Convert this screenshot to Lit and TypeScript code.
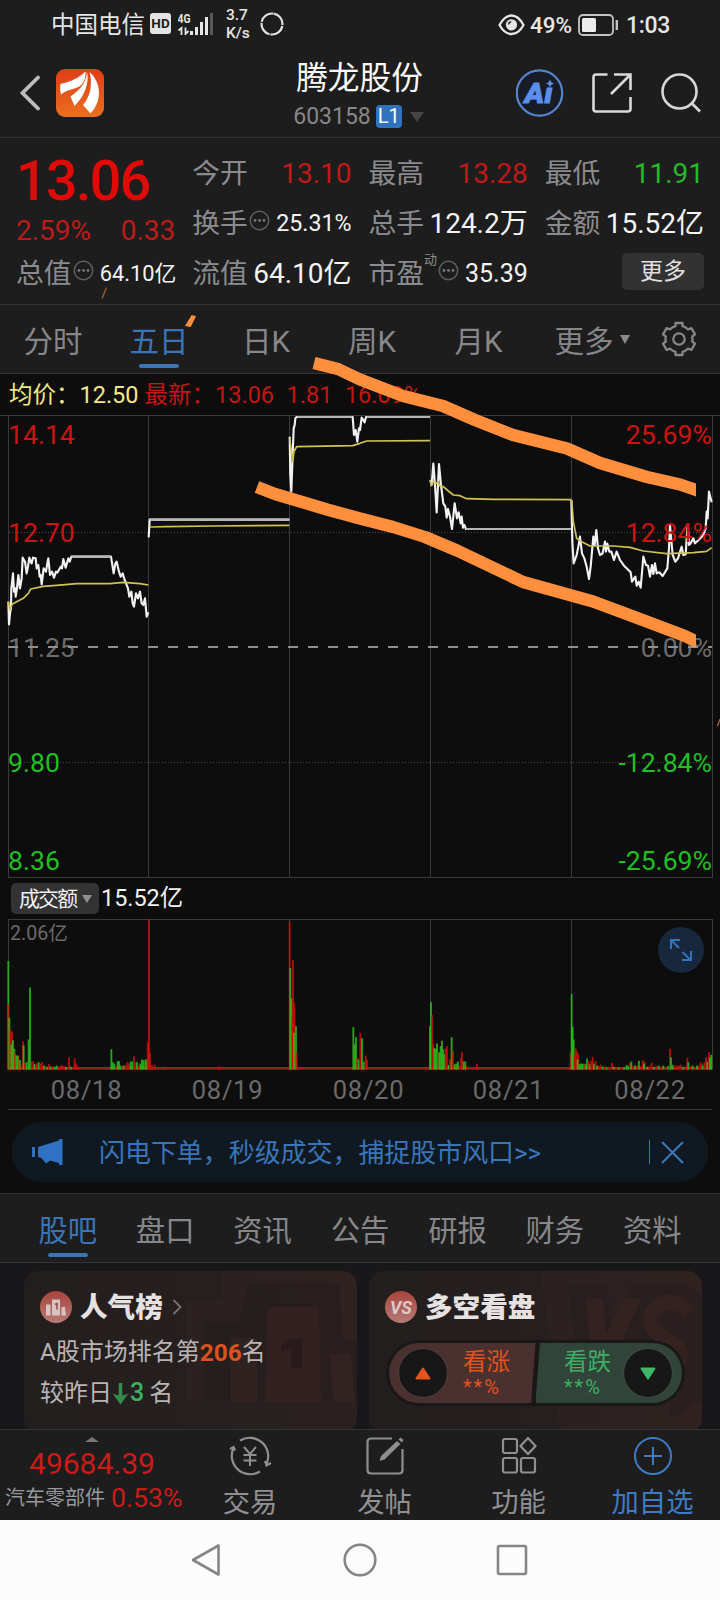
import { LitElement, html, svg, css } from "lit";
import { customElement, property } from "lit/decorators.js";

type Pts = string;
type Bar = [number, number, number];

// Price traces on a x3 grid whose origin is the top-left of the legend strip.
const PRICE: Pts[] = [
  "25,680 27,748 30,715 33,700 34,640 39,595 42,650 46,640 47,665 51,640 55,600 60,640 65,610 68,548 75,560 80,595 84,575 88,548 92,560 95,565 99,548 107,550 110,580 115,570 119,605 122,600 125,628 131,580 138,590 142,565 145,550 150,600 156,590 162,608 168,590 172,593 182,575 186,580 190,552 197,578 205,550 209,560 214,545 333,545 341,595 346,565 350,560 357,590 362,605 368,595 373,612 378,625 384,640 388,665 394,650 398,685 402,695 408,655 414,670 420,650 425,685 430,690 435,670 440,725 445,712",
  "446,487 449,434 868,434",
  "869,185 871,300 874,350 878,240 881,160 884,150 886,130 890,126 1058,126 1062,180 1067,165 1072,200 1077,160 1080,165 1085,128 1094,142 1098,126 1290,126",
  "1292,315 1295,330 1300,266 1305,330 1310,412 1317,267 1323,330 1330,385 1336,395 1340,428 1344,402 1350,425 1356,462 1364,385 1371,430 1376,412 1382,445 1385,425 1389,458 1393,450 1398,462 1712,462",
  "1714,375 1717,500 1721,565 1730,540 1735,515 1740,485 1746,535 1753,550 1760,575 1767,612 1772,575 1780,485 1784,510 1789,465 1794,520 1800,540 1808,535 1815,500 1818,530 1822,506 1828,530 1834,530 1842,555 1850,530 1860,555 1872,572 1880,580 1892,592 1896,620 1906,605 1910,632 1916,620 1922,638 1928,570 1930,545 1938,570 1944,572 1950,605 1956,570 1960,597 1965,565 1970,595 1978,592 1988,603 1996,590 2002,580 2007,520 2010,450 2018,540 2026,560 2034,550 2045,515 2050,540 2057,538 2060,490 2063,450 2067,510 2072,505 2080,490 2085,505 2096,495 2110,480 2117,460 2120,410 2123,430 2127,350 2135,382",
];
const FLAT: Pts[] = ["214,545 333,545", "449,434 868,434", "892,126 1056,126", "1100,126 1290,126", "1398,462 1712,462"];
const AVERAGE: Pts[] = [
  "25,680 30,705 36,688 50,680 70,670 85,655 92,642 130,634 170,631 230,626 330,626 370,622 420,626 445,630",
  "449,456 500,455 640,453 868,451",
  "869,190 874,225 878,260 882,230 890,215 1058,212 1080,205 1100,198 1290,197",
  "1290,315 1294,332 1300,320 1308,325 1315,320 1318,332 1330,335 1345,348 1360,360 1380,362 1400,371 1480,373 1715,374",
  "1715,375 1720,440 1730,490 1745,500 1770,513 1840,513 1890,517 1930,528 2000,536 2080,533 2120,529 2135,518",
];

// Turnover bars: [x, height, direction] on the same x3 grid; 1 = up, 0 = down.
const VOLUME: Bar[] = [
  [25, 325, 0], [24, 195, 1], [28, 155, 0], [31, 118, 1], [36, 114, 1], [34, 75, 0], [39, 88, 0], [43, 62, 0], [45, 50, 1], [49, 42, 0],
  [55, 40, 1], [53, 42, 0], [60, 28, 0], [64, 15, 1], [69, 84, 1], [71, 72, 0], [75, 20, 1], [80, 22, 0], [86, 90, 0], [90, 246, 0],
  [95, 25, 1], [100, 24, 1], [104, 16, 0], [110, 18, 1], [116, 22, 0], [121, 17, 1], [126, 22, 1], [132, 12, 0], [137, 10, 1], [142, 8, 0],
  [147, 16, 1], [152, 9, 0], [158, 10, 1], [164, 8, 0], [170, 12, 0], [176, 8, 1], [182, 11, 1], [187, 13, 1], [192, 9, 1], [198, 7, 0],
  [207, 36, 1], [212, 9, 0], [224, 34, 1], [228, 18, 1], [233, 10, 1],
  [334, 61, 0], [338, 22, 0], [343, 18, 0], [349, 10, 1], [353, 25, 0], [357, 25, 0], [362, 12, 0], [367, 10, 1], [371, 12, 0], [377, 14, 1],
  [382, 22, 1], [387, 18, 1], [392, 24, 0], [397, 24, 0], [402, 40, 1], [407, 22, 1], [411, 22, 0], [416, 12, 1], [421, 18, 0], [426, 30, 0],
  [431, 28, 0], [437, 30, 0], [441, 30, 0], [443, 80, 1], [447, 450, 1], [450, 50, 1], [456, 14, 1], [464, 15, 1], [495, 8, 1], [658, 9, 1],
  [869, 443, 1], [871, 304, 0], [874, 214, 0], [879, 328, 1], [877, 155, 1], [883, 200, 1], [882, 110, 0], [888, 130, 0], [890, 50, 1],
  [1060, 127, 0], [1064, 75, 0], [1068, 97, 0], [1072, 36, 1], [1076, 30, 0], [1081, 110, 1], [1086, 94, 0], [1091, 24, 0], [1097, 42, 1], [1101, 30, 1],
  [1290, 130, 0], [1293, 202, 0], [1296, 163, 1], [1300, 76, 1], [1303, 64, 0], [1307, 62, 0], [1311, 78, 0], [1315, 48, 1], [1318, 52, 0],
  [1322, 70, 0], [1326, 86, 0], [1330, 60, 0], [1333, 46, 0], [1337, 62, 1], [1341, 70, 1], [1346, 14, 0], [1350, 30, 1], [1355, 97, 0],
  [1359, 56, 1], [1364, 16, 0], [1369, 18, 0], [1374, 24, 0], [1379, 12, 1], [1383, 34, 1], [1386, 52, 1], [1391, 24, 0], [1396, 24, 0], [1401, 10, 1], [1431, 17, 1],
  [1712, 50, 1], [1715, 226, 0], [1718, 128, 0], [1721, 90, 0], [1724, 40, 1], [1727, 64, 1], [1731, 54, 1], [1735, 46, 1], [1733, 30, 0],
  [1739, 16, 0], [1744, 18, 0], [1749, 17, 0], [1753, 18, 1], [1757, 16, 0], [1761, 33, 0], [1765, 26, 1], [1769, 16, 0], [1774, 26, 1],
  [1778, 38, 1], [1782, 18, 0], [1787, 25, 1], [1792, 12, 0], [1797, 10, 1], [1802, 15, 1], [1808, 9, 0], [1814, 8, 1], [1820, 6, 0],
  [1826, 6, 1], [1836, 20, 1], [1841, 8, 0], [1848, 7, 1], [1856, 7, 0], [1864, 6, 1], [1872, 7, 0], [1880, 13, 0], [1885, 10, 0],
  [1890, 20, 1], [1894, 24, 0], [1899, 10, 1], [1905, 12, 0], [1911, 12, 1], [1917, 26, 0], [1923, 10, 1], [1928, 28, 1], [1934, 24, 1],
  [1932, 18, 0], [1942, 8, 0], [1948, 10, 1], [1955, 20, 1], [1962, 7, 0], [1969, 10, 1], [1976, 12, 0], [1984, 9, 1], [1990, 12, 0],
  [1998, 7, 1], [2005, 11, 0], [2010, 62, 1], [2013, 36, 0], [2018, 14, 0], [2024, 10, 1], [2030, 12, 1], [2037, 12, 1], [2043, 14, 1],
  [2050, 8, 0], [2058, 9, 1], [2062, 36, 1], [2065, 22, 0], [2071, 10, 1], [2078, 12, 0], [2085, 7, 1], [2091, 12, 0], [2097, 10, 1],
  [2102, 22, 1], [2108, 14, 0], [2113, 22, 1], [2118, 36, 1], [2122, 24, 0], [2127, 52, 1], [2130, 36, 0], [2134, 44, 0],
];

const DIVIDERS = [8.5, 148.5, 289.5, 430.5, 571.5, 712.5];
const DATES: [string, number][] = [["08/18", 86.5], ["08/19", 227.5], ["08/20", 368.5], ["08/21", 508.5], ["08/22", 650]];

@customElement("trend-chart")
export class TrendChart extends LitElement {
  static styles = css`
    :host { display: block; }
    svg { display: block; font-family: Roboto, "Noto Sans CJK SC", sans-serif; }
    .grid { stroke: #3a3a3a; stroke-width: 1; fill: none; }
    .dot { stroke: #4a4a4a; stroke-dasharray: 1 2; }
    .base { stroke: #8f8f8f; stroke-width: 2; stroke-dasharray: 10 10; }
    .price { stroke: #f2f2f2; stroke-width: 6.4; fill: none; stroke-linejoin: round; }
    .flat { stroke: #b4b6b6; stroke-width: 6.4; fill: none; }
    .avg { stroke: #d0c354; stroke-width: 5; fill: none; stroke-linejoin: round; }
    .lab { font-size: 26.6px; }
    .end { text-anchor: end; }
    .up { fill: #ca1513; }
    .mid { fill: #6c6c6c; }
    .down { fill: #20bf22; }
  `;
  render() {
    const rows: [number, string, string, string][] = [
      [444, "14.14", "25.69%", "up"],
      [542.2, "12.70", "12.84%", "up"],
      [657.2, "11.25", "0.00%", "mid"],
      [772.2, "9.80", "-12.84%", "down"],
      [870, "8.36", "-25.69%", "down"],
    ];
    return html`<svg width="720" height="463" viewBox="0 415 720 463">
      <path class="grid" d="M0 415.5H720M8 877.5H713" />
      ${DIVIDERS.map((x) => svg`<path class="grid" d="M${x} 416V877" />`)}
      <path class="grid dot" d="M9 532.5H712M9 762.5H712" />
      <g transform="translate(0 375) scale(.33333)">
        ${PRICE.map((p) => svg`<polyline class="price" points=${p} />`)}
        ${FLAT.map((p) => svg`<polyline class="flat" points=${p} />`)}
        ${AVERAGE.map((p) => svg`<polyline class="avg" points=${p} />`)}
      </g>
      ${rows.map((r) => svg`<text class="lab ${r[3]}" x="8" y=${r[0]}>${r[1]}</text><text class="lab end ${r[3]}" x="712" y=${r[0]}>${r[2]}</text>`)}
      <path class="base" d="M8 647H712" />
    </svg>`;
  }
}

@customElement("turnover-chart")
export class TurnoverChart extends LitElement {
  static styles = css`
    :host { display: block; }
    svg { display: block; font-family: Roboto, "Noto Sans CJK SC", sans-serif; }
    .grid { stroke: #3a3a3a; stroke-width: 1; fill: none; }
    .max { font-size: 19.6px; fill: #6a6a6a; }
    .date { font-size: 25.5px; fill: #6a6a6a; text-anchor: middle; letter-spacing: 0.7px; }
    .u { fill: #cf100d; opacity: 0.82; }
    .d { fill: #2bc31c; opacity: 0.82; }
    .floor { fill: #961f1f; }
    .arrow { stroke: #3273bd; stroke-width: 2; fill: none; }
  `;
  render() {
    return html`<svg width="720" height="191" viewBox="0 919 720 191">
      <path class="grid" d="M8 919.5H713M8 1109.5H712" />
      ${DIVIDERS.map((x) => svg`<path class="grid" d="M${x} 920V1069" />`)}
      <text class="max" x="10" y="940">2.06亿</text>
      <rect class="floor" x="8" y="1067" width="704.5" height="2.7" />
      <g transform="translate(0 1069.5) scale(.33333)">
        ${VOLUME.map(([x, h, up]) => svg`<rect class=${up ? "u" : "d"} x=${x - 2.8} y=${-h} width="5.6" height=${h} />`)}
      </g>
      <circle cx="681" cy="950" r="23" fill="#17283c" />
      <path class="arrow" d="M671 949V940H680M671.5 940.5L679 948M682.5 952L690 959.5M691 951V960H682" />
      ${DATES.map(([t, x]) => svg`<text class="date" x=${x} y="1098.7">${t}</text>`)}
    </svg>`;
  }
}

@customElement("quote-cell")
export class QuoteCell extends LitElement {
  @property() label = "";
  @property() sup = "";
  @property() value = "";
  @property() tone = "plain";
  @property({ type: Number }) size = 28;
  @property({ type: Boolean }) info = false;
  static styles = css`
    :host { display: flex; align-items: center; height: 50px; line-height: 51px; white-space: nowrap; }
    .label { font-size: 27.8px; color: #8b8b8f; }
    .sup { font-size: 13px; color: #8b8b8f; line-height: 14px; align-self: flex-start; margin-top: 5px; }
    .info { margin-left: 1px; margin-top: -5px; }
    .value { margin-left: auto; margin-right: -1px; }
    .plain { color: #f4f4f4; }
    .up { color: #bd1a18; }
    .down { color: #25b92a; }
    .s22 { font-size: 21.8px; margin-right: -2px; }
    .s23 { font-size: 23.2px; }
    .s25 { font-size: 25px; }
    .s28 { font-size: 28px; }
  `;
  render() {
    return html`<span class="label">${this.label}</span>
      ${this.sup ? html`<span class="sup">${this.sup}</span>` : ""}
      ${this.info
        ? html`<svg class="info" width="21" height="21" viewBox="0 0 21 21">
            <circle cx="10.5" cy="10.5" r="9.2" fill="none" stroke="#5f5f62" stroke-width="1.5" />
            <g fill="#77777a"><circle cx="6" cy="10.5" r="1.4" /><circle cx="10.5" cy="10.5" r="1.4" /><circle cx="15" cy="10.5" r="1.4" /></g>
          </svg>`
        : ""}
      <span class="value s${this.size} ${this.tone}">${this.value}</span>`;
  }
}

@customElement("app-root")
export class AppRoot extends LitElement {
  static styles = css`
    :host { display: block; position: relative; width: 720px; height: 1600px; overflow: hidden; background: #0d0d0d;
      font-family: Roboto, "Noto Sans CJK SC", sans-serif; color: #eee; }
    * { box-sizing: border-box; }
    svg { display: block; flex: none; }
    .panel { background: #1d1d1d; }
    .status { height: 50px; display: flex; align-items: center; padding: 0 50px 0 51px; color: #e6e6e6; }
    .carrier { font-size: 23.5px; line-height: 50px; height: 50px; }
    .hd { margin-left: 5px; width: 21px; height: 21px; border-radius: 3px; background: #e4e4e4; color: #1d1d1d; font-size: 13.5px; font-weight: 700; line-height: 21px; text-align: center; margin-top: -3px; }
    .signal { margin-left: 7px; margin-top: -3px; }
    .rate { margin-left: 13px; font-size: 15.5px; font-weight: 500; line-height: 18px; margin-top: -3px; }
    .ring { margin-left: 10px; margin-top: -2px; }
    .eye { margin-left: auto; }
    .pct { margin-left: 5px; font-size: 22.5px; font-weight: 500; line-height: 50px; width: 48px; }
    .clock { margin-left: 7px; font-size: 23px; font-weight: 500; line-height: 51px; letter-spacing: -0.3px; }
    .head { height: 88px; display: flex; align-items: center; padding: 0 19px 2px; border-bottom: 1px solid #343434; }
    .side { flex: 1; display: flex; align-items: center; }
    .side.right { justify-content: flex-end; }
    .logo { margin-left: 16px; }
    .name { font-size: 31.7px; font-weight: 400; line-height: 40px; color: #fafafa; text-align: center; margin: -1px -1px 0 1px; }
    .code { display: flex; align-items: center; justify-content: center; font-size: 23px; line-height: 30px; color: #87878a; margin-top: 3px; }
    .l1 { margin: 0 8px 0 5px; width: 26px; height: 23px; border-radius: 4px; background: #2f72bd; color: #fff; font-size: 20px; line-height: 23px; text-align: center; }
    .title { margin-top: 6px; margin-right: 3px; }
    .share { margin-left: 28px; }
    .search { margin-left: 29px; }
    .quote { height: 167px; padding: 10px 17px 0 16px; border-bottom: 1px solid #343434; display: grid; grid-template-columns: repeat(4, 1fr); column-gap: 18px; }
    .price { font-size: 55.5px; font-weight: 500; line-height: 67px; height: 66px; color: #e00a08; letter-spacing: -1.6px; }
    .change { display: flex; justify-content: space-between; font-size: 28px; line-height: 34px; height: 34px; color: #bd1a18; margin-right: -1px; }
    .more { height: 50px; display: flex; justify-content: flex-end; align-items: center; margin-right: -1px; }
    .more span { width: 82px; height: 37px; margin-top: -4px; border-radius: 5px; background: #323232; color: #e0e0e0; font-size: 23px; line-height: 37px; text-align: center; }
    .period { height: 69px; border-bottom: 1px solid #343434; display: grid; grid-template-columns: 106px 106px 108px 104px 109px 118px 69px; font-size: 29.5px; line-height: 74px; color: #87878a; }
    .period div { display: flex; justify-content: center; }
    .on { color: #3a75b8; position: relative; }
    .on::after { content: ""; position: absolute; width: 40px; height: 4px; border-radius: 2px; background: #3a75b8; left: calc(50% - 20px); }
    .period > .on::after { top: 59px; }
    .period .tri { margin: 30px 0 0 6px; }
    .period .gear { margin: 16px 14px 0 0; }
    .legend { height: 41px; display: flex; padding-left: 9px; font-size: 23.5px; line-height: 42px; color: #f3e887; white-space: pre; }
    .legend .new { margin-left: 6px; color: #c41614; }
    .legend .n2 { margin-left: 12.5px; color: #c41614; }
    .turn { height: 41px; display: flex; align-items: center; padding-left: 11px; }
    .pill { width: 88px; height: 31px; border-radius: 5px; background: #333; display: flex; align-items: center; justify-content: space-between; padding: 0 7px 0 8px; font-size: 21px; letter-spacing: -1.9px; line-height: 32px; color: #f2f2f2; }
    .amount { margin-left: 2px; font-size: 23.4px; color: #f2f2f2; line-height: 41px; }
    .banner { margin: 12px 12px 11px; height: 60px; border-radius: 30px; background: #101922; display: flex; align-items: center; padding: 0 24px 0 20px; font-size: 25.95px; line-height: 60px; color: #3a75b8; }
    .banner .msg { margin-left: 36px; flex: 1; padding-top: 2px; }
    .banner i { width: 1px; height: 24px; background: #3a75b8; margin-right: 11px; }
    .sections { height: 70px; border-top: 1px solid #343434; border-bottom: 1px solid #343434; padding: 0 19px; display: grid; grid-template-columns: repeat(7, 1fr); text-align: center; font-size: 29.3px; line-height: 74px; color: #87878a; }
    .sections > .on::after { top: 59px; }
    .cards { height: 166px; background: #18181a; padding: 8px 18px 0 24px; display: flex; gap: 12px; overflow: hidden; }
    .card { width: 333px; height: 162px; border-radius: 15px; background: linear-gradient(90deg, #231e1e, #271f1f 60%, #2b2020); padding: 20px 16px 0; display: grid; grid-template-rows: 32px auto; overflow: hidden; position: relative; flex: none; }
    .ghost { position: absolute; right: 0; top: 0; }
    .cap { display: flex; align-items: center; font-size: 27.6px; font-weight: 700; line-height: 32px; color: #e6e2e2; position: relative; }
    .cap b { margin: 2px 8px 0; }
    .body { font-size: 24px; line-height: 41px; color: #b9b5b5; padding-top: 9px; position: relative; }
    .body div { display: flex; align-items: center; height: 41px; }
    .rank { color: #d9521f; font-weight: 700; font-size: 24.5px; }
    .drop { color: #3cb25f; font-weight: 500; font-size: 25px; margin: 0 5px 2px 1px; }
    .poll { margin: 17px 0 0 1px; width: 299px; height: 66px; border-radius: 33px; background: #1a1718; padding: 3px; display: flex; position: relative; }
    .half { flex: 1; display: flex; align-items: center; }
    .bull { background: #4a302e; color: #e2531d; border-radius: 30px 0 0 30px; clip-path: polygon(0 0, 100% 0, 97% 100%, 0 100%); padding-left: 10px; gap: 16px; }
    .bear { background: #31443a; color: #3fae62; border-radius: 0 30px 30px 0; clip-path: polygon(3% 0, 100% 0, 100% 100%, 0 100%); justify-content: flex-end; padding-right: 10px; gap: 13px; }
    .vote { font-size: 23.5px; line-height: 34px; }
    .vote small { display: block; font-size: 20px; line-height: 20px; letter-spacing: 2px; margin: -2px -4px 4px 0; }
    .knob { width: 48px; height: 48px; border-radius: 50%; background: #171718; display: flex; align-items: center; justify-content: center; box-shadow: 0 0 2px #7778; flex: none; }
    .bottom { height: 91px; border-top: 1px solid #343434; display: grid; grid-template-columns: 183px 134px 135px 133px 135px; }
    .index { display: flex; flex-direction: column; align-items: center; color: #cc1a18; padding: 7px 0 0 1px; }
    .index strong { font-weight: 400; font-size: 30px; line-height: 40px; margin-top: 2px; }
    .index div { display: flex; align-items: center; font-size: 26.7px; line-height: 30px; white-space: nowrap; align-self: flex-start; margin: -1px 0 0 4px; }
    .index em { font-style: normal; font-size: 20px; color: #98989b; margin-right: 6px; }
    .act { display: flex; flex-direction: column; align-items: center; font-size: 27.3px; line-height: 40px; color: #909093; padding-top: 5px; }
    .act svg { margin-bottom: 6px; }
    .act.blue { color: #3d7cc4; }
    .nav { height: 80px; background: #fcfcfc; display: flex; align-items: center; justify-content: space-between; padding: 0 192px 0 190px; }
    .nav svg:nth-child(2) { margin-left: 3px; }
    .ink { position: absolute; left: 0; top: 0; pointer-events: none; }
  `;

  private tri(w: number, h: number, fill: string, cls = "") {
    return html`<svg class=${cls} width=${w} height=${h} viewBox="0 0 10 8" preserveAspectRatio="none"><path d="M0 0H10L5 8Z" fill=${fill} /></svg>`;
  }

  private renderStatus() {
    return html`<div class="status panel">
      <span class="carrier">中国电信</span><span class="hd">HD</span>
      <svg class="signal" width="35" height="23" viewBox="178 12 35 23">
        <text x="177.5" y="23" font-size="13" font-weight="700" fill="#e6e6e6" textLength="13" lengthAdjust="spacingAndGlyphs">4G</text>
        <path d="M190 31H193V35H190ZM195 27H198V35H195ZM200 22H203V35H200ZM205 17H208V35H205Z" fill="#e6e6e6" />
        <path d="M181.500 35V28L178.500 30.500M185.500 27.500V34L188.500 31" stroke="#e6e6e6" stroke-width="1.800" fill="none" />
        <path d="M210 13H213V35H210Z" fill="#5a5a5a" />
      </svg>
      <div class="rate">3.7<br />K/s</div>
      <svg class="ring" width="24" height="24" viewBox="0 0 24 24"><circle cx="12" cy="12" r="10.500" fill="none" stroke="#e0e0e0" stroke-width="2.200" stroke-dasharray="15.500 1 16 1 15 1 15.500 1" transform="rotate(-80 12 12)" /></svg>
      <svg class="eye" width="27" height="22" viewBox="0 0 27 22"><path d="M1.500 11C5 4.500 9 1.500 13.500 1.500S22 4.500 25.500 11C22 17.500 18 20 13.500 20S5 17.500 1.500 11Z" fill="none" stroke="#e6e6e6" stroke-width="2.300" /><circle cx="13.500" cy="10.800" r="5.600" fill="#e6e6e6" /><path d="M10.500 10.500Q10.800 8 13.200 7.800" stroke="#1d1d1d" stroke-width="1.500" fill="none" /></svg>
      <span class="pct">49%</span>
      <svg width="41" height="22" viewBox="0 0 41 22"><rect x="1" y="1" width="34" height="20" rx="4" fill="none" stroke="#c4c4c4" stroke-width="1.800" /><rect x="4" y="4" width="14" height="14" rx="1.500" fill="#ececec" /><path d="M38.800 6V16" stroke="#c4c4c4" stroke-width="2.400" /></svg>
      <span class="clock">1:03</span>
    </div>`;
  }

  private renderHeader() {
    return html`<div class="head panel">
      <div class="side">
        <svg width="21" height="36" viewBox="0 0 21 36"><path d="M19 2.500L3.500 18L19 33.500" fill="none" stroke="#bcbcbc" stroke-width="3.800" stroke-linecap="round" /></svg>
        <svg class="logo" width="48" height="48" viewBox="0 0 48 48">
          <defs><linearGradient id="lg" x1="0" y1="0" x2="0" y2="1"><stop offset="0" stop-color="#e23c18" /><stop offset="1" stop-color="#e9701e" /></linearGradient></defs>
          <rect width="48" height="48" rx="9" fill="url(#lg)" />
          <path d="M4.500 15C15 12.500 23 9 29.500 2.500C30 9 28 14 24 17C18 21 11 20 5 25.500C4 22 4 18 4.500 15Z" fill="#fff" />
          <path d="M31 3C33.500 13 29 27 18.500 37L14.500 27.500C23 21.500 30 15 31 3Z" fill="#fff" />
          <path d="M33.500 3C45 13 47 31 34.500 44.500L27 36C34 28 37 16 33.500 3Z" fill="#fff" />
        </svg>
      </div>
      <div class="title">
        <div class="name">腾龙股份</div>
        <div class="code">603158<span class="l1">L1</span>${this.tri(14, 10, "#454545")}</div>
      </div>
      <div class="side right">
        <svg width="48" height="48" viewBox="0 0 48 48">
          <circle cx="23.500" cy="24" r="22.700" fill="#181c26" stroke="#5585cf" stroke-width="2.200" />
          <text x="8.500" y="33.500" font-size="27" font-weight="900" font-style="italic" fill="#5a90ec" stroke="#5a90ec" stroke-width=".8" textLength="28" lengthAdjust="spacingAndGlyphs">Aı</text>
          <path d="M34 10.500L35.300 13.200L38 14.500L35.300 15.800L34 18.500L32.700 15.800L30 14.500L32.700 13.200Z" fill="#5a90ec" />
        </svg>
        <svg class="share" width="40" height="40" viewBox="0 0 40 40"><path d="M15.500 1.500H4Q1.500 1.500 1.500 4V36Q1.500 38.500 4 38.500H35.500Q38.500 38.500 38.500 36V24M22 1.500H38.500V17M38 2L19 21" fill="none" stroke="#dadada" stroke-width="2.600" /></svg>
        <svg class="search" width="40" height="40" viewBox="0 0 40 40"><circle cx="18.500" cy="18.500" r="17" fill="none" stroke="#d6d6d6" stroke-width="2.600" /><path d="M30.500 30L39 38.500" stroke="#d6d6d6" stroke-width="2.800" /></svg>
      </div>
    </div>`;
  }

  private renderQuote() {
    return html`<div class="quote panel">
      <div>
        <div class="price">13.06</div>
        <div class="change"><span>2.59%</span><span>0.33</span></div>
        <quote-cell label="总值" value="64.10亿" size="22" info></quote-cell>
      </div>
      <div>
        <quote-cell label="今开" value="13.10" tone="up"></quote-cell>
        <quote-cell label="换手" value="25.31%" size="23" info></quote-cell>
        <quote-cell label="流值" value="64.10亿"></quote-cell>
      </div>
      <div>
        <quote-cell label="最高" value="13.28" tone="up"></quote-cell>
        <quote-cell label="总手" value="124.2万"></quote-cell>
        <quote-cell label="市盈" sup="动" value="35.39" size="25" info></quote-cell>
      </div>
      <div>
        <quote-cell label="最低" value="11.91" tone="down"></quote-cell>
        <quote-cell label="金额" value="15.52亿"></quote-cell>
        <div class="more"><span>更多</span></div>
      </div>
    </div>`;
  }

  private renderPeriods() {
    return html`<div class="period panel">
      <div>分时</div><div class="on">五日</div><div>日K</div><div>周K</div><div>月K</div>
      <div>更多${this.tri(10, 9, "#8b8b8e", "tri")}</div>
      <div><svg class="gear" width="36" height="36" viewBox="0 0 36 36"><path d="M14.500 2H21.500V5.200Q24.600 6.100 26.800 8.300L30.400 7.200L34 13.300L31.200 15.500Q31.900 18 31.200 20.500L34 22.700L30.400 28.800L26.800 27.700Q24.600 29.900 21.500 30.800V34H14.500V30.800Q11.400 29.900 9.200 27.700L5.600 28.800L2 22.700L4.800 20.500Q4.100 18 4.800 15.500L2 13.300L5.600 7.200L9.200 8.300Q11.400 6.100 14.500 5.200Z" fill="none" stroke="#87878a" stroke-width="2.300" stroke-linejoin="round" /><circle cx="18" cy="18" r="5.700" fill="none" stroke="#87878a" stroke-width="2.300" /></svg></div>
    </div>`;
  }

  private renderCards() {
    return html`<div class="cards">
      <div class="card">
        <svg class="ghost" width="180" height="140" viewBox="177 1271 180 140">
          <path d="M186 1400V1300H222V1271H357V1400Z" fill="#ff8060" opacity=".02" />
          <path d="M204 1400V1321H240L248 1283H339L343 1340H357V1400Z" fill="#1c1616" opacity=".3" />
          <path d="M267 1307H319L321 1402H265Z" fill="#5a2a2a" opacity=".24" /><path d="M231 1338H257V1402H231ZM330 1354H351L355 1402H333Z" fill="#5a3030" opacity=".2" />
          <path d="M281 1346L291 1339H302V1368H291V1348L281 1352Z" fill="#1a1414" opacity=".45" />
        </svg>
        <div class="cap">
          <svg width="32" height="32" viewBox="0 0 32 32"><defs><linearGradient id="rg" x1="0" y1="0" x2="0" y2="1"><stop offset="0" stop-color="#a8433c" /><stop offset="1" stop-color="#b87a76" /></linearGradient></defs><circle cx="16" cy="16" r="16" fill="url(#rg)" /><path d="M12 8.500H20V24.500H12ZM6 13.500H10.500V24.500H6ZM21.500 16H25L26 24.500H21.500Z" fill="#d6c4c3" /><path d="M15 13.500L17 12.500V18.500" stroke="#8d4a46" stroke-width="1.500" fill="none" /></svg>
          <b>人气榜</b>
          <svg width="12" height="16" viewBox="0 0 12 16"><path d="M2.500 1L9.500 8L2.500 15" fill="none" stroke="#777172" stroke-width="1.800" /></svg>
        </div>
        <div class="body">
          <div>A股市场排名第<span class="rank">206</span>名</div>
          <div>较昨日<svg width="17" height="23" viewBox="0 0 17 23"><path d="M8.500 1V16" stroke="#368a4e" stroke-width="3.600" /><path d="M.5 11.500Q8.500 15.500 16.500 11.500L8.500 22.500Z" fill="#368a4e" /></svg><span class="drop">3</span>名</div>
        </div>
      </div>
      <div class="card">
        <svg class="ghost" width="180" height="162" viewBox="522 1271 180 162">
          <path d="M541 1271H702V1433H560Z" fill="#ff8060" opacity=".02" />
          <path d="M568 1284H606L612 1330L632 1284H680Q702 1290 702 1300V1400L670 1420V1340H575Z" fill="#1c1616" opacity=".25" />
          <path d="M585 1299H603L606 1335L624 1299H642L616 1352H592Z" fill="#5a2a2a" opacity=".26" />
          <path d="M690 1312Q668 1292 652 1312Q644 1328 668 1340Q690 1352 674 1366" stroke="#5a2a2a" stroke-width="15" fill="none" opacity=".22" />
        </svg>
        <div class="cap">
          <svg width="32" height="32" viewBox="0 0 32 32"><defs><linearGradient id="vg" x1="0" y1="0" x2="0" y2="1"><stop offset="0" stop-color="#a8433c" /><stop offset="1" stop-color="#b87a76" /></linearGradient></defs><circle cx="16" cy="16" r="16" fill="url(#vg)" /><text x="5" y="22.500" font-size="19" font-weight="700" font-style="italic" fill="#dccac9" textLength="22" lengthAdjust="spacingAndGlyphs">VS</text></svg>
          <b>多空看盘</b>
        </div>
        <div class="poll">
          <div class="half bull"><div class="knob"><svg width="16" height="13" viewBox="0 0 16 13"><path d="M8 1.500L14.500 11.500H1.500Z" fill="#e2531d" stroke="#e2531d" stroke-width="2" stroke-linejoin="round" /></svg></div><div class="vote">看涨<small>**%</small></div></div>
          <div class="half bear"><div class="vote">看跌<small>**%</small></div><div class="knob"><svg width="16" height="13" viewBox="0 0 16 13"><path d="M8 11.500L14.500 1.500H1.500Z" fill="#3fb568" stroke="#3fb568" stroke-width="2" stroke-linejoin="round" /></svg></div></div>
        </div>
      </div>
    </div>`;
  }

  private renderBottom() {
    const s = "#8f8f92";
    return html`<div class="bottom panel">
      <div class="index">
        <svg width="14" height="5" viewBox="0 0 14 5"><path d="M0 5L7 0L14 5Z" fill="#77777a" /></svg>
        <strong>49684.39</strong>
        <div><em>汽车零部件</em>0.53%</div>
      </div>
      <div class="act"><svg width="44" height="42" viewBox="0 0 44 42"><path d="M12 5.500A18.500 18.500 0 0 1 38.500 29M32 36.500A18.500 18.500 0 0 1 5.500 13M2 14L5.500 12L7 15.500M43 28L38.500 30.500L37 26" fill="none" stroke=${s} stroke-width="2.200" /><path d="M16 12L22 19L28 12M22 19V31M15.500 20H28.500M15.500 25.500H28.500" fill="none" stroke=${s} stroke-width="2" /></svg>交易</div>
      <div class="act"><svg width="40" height="42" viewBox="0 0 40 42"><path d="M27 3.500H6Q2.500 3.500 2.500 7V35Q2.500 38.500 6 38.500H34Q37.500 38.500 37.500 35V14" fill="none" stroke=${s} stroke-width="2.200" /><path d="M14.500 26L16 21L32 6L35.500 9L19.500 24.500ZM33.500 4.500L35.500 2.500L38.500 5L36.800 7.500Z" fill=${s} /></svg>发帖</div>
      <div class="act"><svg width="36" height="42" viewBox="0 0 36 42"><g fill="none" stroke=${s} stroke-width="2.200"><rect x="2" y="4" width="14" height="14" rx="2" /><rect x="2" y="23" width="14" height="14.500" rx="2" /><rect x="20" y="23" width="14" height="14.500" rx="2" /><path d="M27 3L34.500 11L27 19L19.500 11Z" stroke-linejoin="round" /></g></svg>功能</div>
      <div class="act blue"><svg width="40" height="42" viewBox="0 0 40 42"><circle cx="20" cy="21" r="18" fill="none" stroke="#3d7cc4" stroke-width="2" /><path d="M11 21H29M20 12V30" stroke="#3d7cc4" stroke-width="2" /></svg>加自选</div>
    </div>`;
  }

  render() {
    return html`
      ${this.renderStatus()} ${this.renderHeader()} ${this.renderQuote()} ${this.renderPeriods()}
      <div class="legend"><span>均价：12.50</span><span class="new">最新：13.06</span><span class="n2">1.81</span><span class="n2">16.09%</span></div>
      <trend-chart></trend-chart>
      <div class="turn"><span class="pill">成交额${this.tri(10, 8, "#8f8f92")}</span><span class="amount">15.52亿</span></div>
      <turnover-chart></turnover-chart>
      <div class="banner">
        <svg width="31" height="28" viewBox="0 0 31 28"><path d="M0 9H3V19H0ZM6 9L27 2.500V1H30.500V27H27V25L18 22.500L14 25.500L9.500 20L6 19Z" fill="#2f72c4" /></svg>
        <span class="msg">闪电下单，秒级成交，捕捉股市风口&gt;&gt;</span><i></i>
        <svg width="23" height="23" viewBox="0 0 23 23"><path d="M1 1L22 22M22 1L1 22" stroke="#3a75b8" stroke-width="2.200" /></svg>
      </div>
      <div class="sections panel"><div class="on">股吧</div><div>盘口</div><div>资讯</div><div>公告</div><div>研报</div><div>财务</div><div>资料</div></div>
      ${this.renderCards()} ${this.renderBottom()}
      <div class="nav">
        <svg width="30" height="36" viewBox="0 0 30 36"><path d="M28.500 3.500V32.500L3 18Z" fill="none" stroke="#858585" stroke-width="2.600" stroke-linejoin="round" /></svg>
        <svg width="36" height="36" viewBox="0 0 36 36"><circle cx="18" cy="18" r="15.300" fill="none" stroke="#858585" stroke-width="2.600" /></svg>
        <svg width="32" height="32" viewBox="0 0 32 32"><rect x="2" y="2" width="28" height="28" rx="1.500" fill="none" stroke="#858585" stroke-width="2.600" /></svg>
      </div>
      <svg class="ink" width="720" height="760" viewBox="0 0 720 760">
        <defs><clipPath id="edge"><rect width="696" height="760" /></clipPath></defs>
        <g fill="none" stroke="#ff8f3c" stroke-width="12.300" stroke-linejoin="round" clip-path="url(#edge)">
          <path d="M314 363L338 369L360 379.500L403 396L443 406L475 420L513 435L567 448.500L600 463L647 477L680 484.500L700 491.500" />
          <path d="M257 487L275 494L327 509.500L360 518.500L393 527L425 537L457 550.500L523 582L593 601.500L640 619L685 636L702 644" />
        </g>
        <path d="M191.700 315L196 316.300L190.700 327L185 326Z" fill="#ff8f3c" />
        <path d="M106.500 287.500L102 298.500" stroke="#a5602c" stroke-width="1.300" /><path d="M720 719L717.500 726" stroke="#a5602c" stroke-width="1.300" />
      </svg>`;
  }
}
